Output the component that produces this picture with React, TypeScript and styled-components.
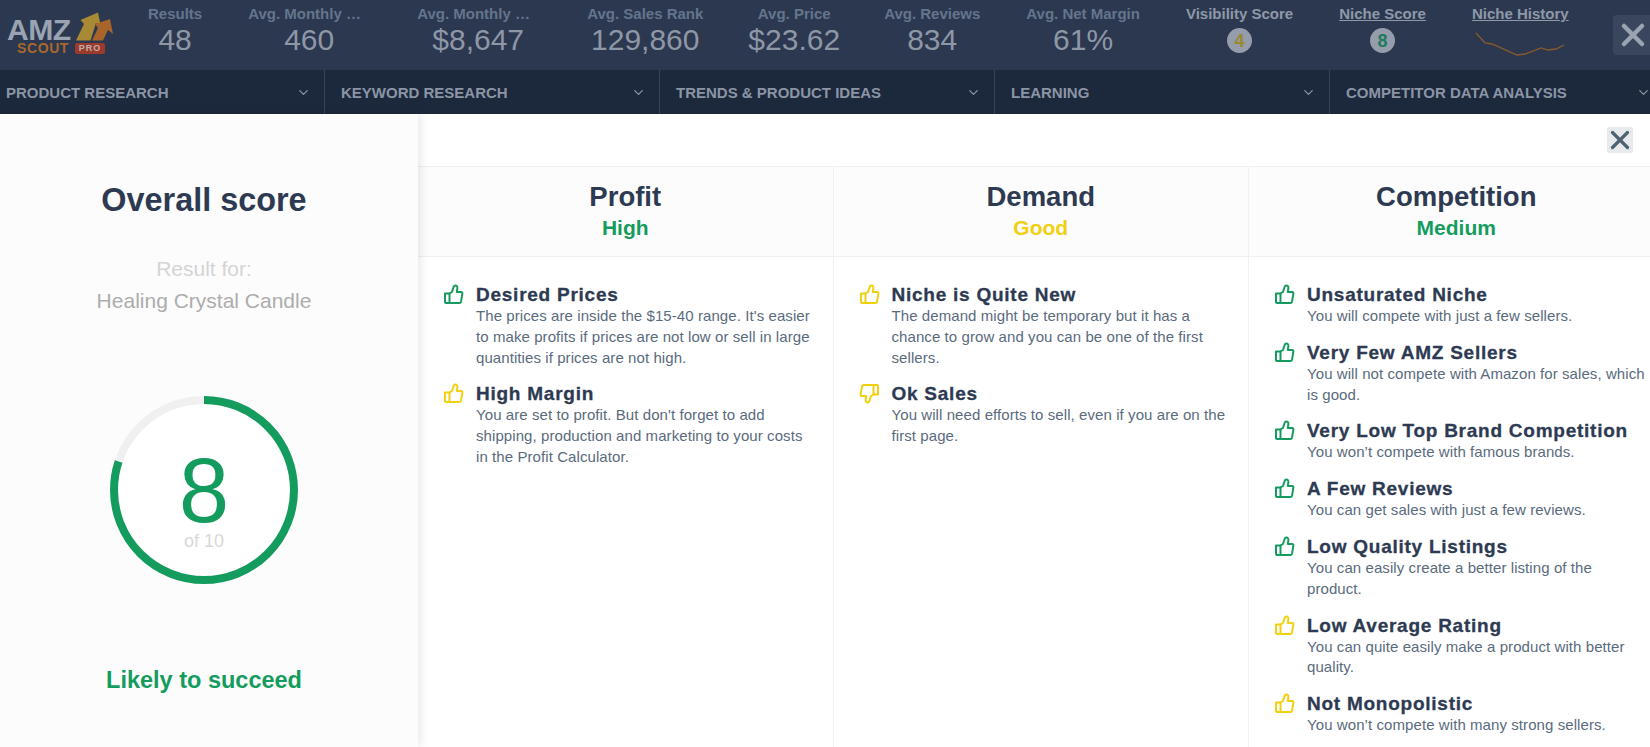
import React from 'react';
import styled, { createGlobalStyle } from 'styled-components';
import { ChevronDown, X } from 'lucide-react';

const GREEN = '#149c5e';
const YELLOW = '#f2d00f';
const NAVY = '#2d3a52';

const GlobalStyle = createGlobalStyle`
    html, body {
        margin: 0;
        padding: 0;
        height: 100%;
        overflow: hidden;
        background: #ffffff;
        font-family: "Liberation Sans", Arial, sans-serif;
    }
`;

const Page = styled.div`
    width: 1650px;
    height: 747px;
    overflow: hidden;
    display: flex;
    flex-direction: column;
`;

// top stats bar
const TopBar = styled.header`
    flex: 0 0 70px;
    background: #2c3850;
    display: flex;
    align-items: flex-start;
    position: relative;
`;

const Logo = styled.div`
    flex: 0 0 148px;
    height: 70px;
    position: relative;
`;

const LogoAmz = styled.span`
    position: absolute;
    left: 7px;
    top: 15px;
    font-size: 29px;
    line-height: 30px;
    font-weight: 700;
    color: #9aa3b2;
    letter-spacing: -0.5px;
    transform: scaleX(1.04);
    transform-origin: left;
`;

const LogoScout = styled.span`
    position: absolute;
    left: 17px;
    top: 41px;
    font-size: 14px;
    line-height: 14px;
    font-weight: 700;
    color: #a8682c;
    letter-spacing: 0.6px;
`;

const LogoPro = styled.span`
    position: absolute;
    left: 75px;
    top: 43px;
    width: 30px;
    height: 11px;
    border-radius: 2px;
    background: #9c3a2c;
    color: #bcb0ac;
    font-size: 9px;
    line-height: 11px;
    font-weight: 700;
    text-align: center;
    letter-spacing: 1px;
`;

const LogoArrows = styled.svg`
    position: absolute;
    left: 75px;
    top: 12px;
`;

const Stats = styled.div`
    display: flex;
    gap: 46px;
    padding-top: 5px;
`;

const Stat = styled.div<{ $nudge?: number }>`
    margin-left: ${(p) => p.$nudge ?? 0}px;
    text-align: center;
    white-space: nowrap;
`;

const StatLabel = styled.div<{ $bright?: boolean; $link?: boolean; $truncate?: boolean }>`
    font-size: 15px;
    line-height: 18px;
    font-weight: 700;
    color: ${(p) => (p.$bright ? '#8f98a8' : '#64758c')};
    text-decoration: ${(p) => (p.$link ? 'underline' : 'none')};
    ${(p) => p.$truncate && 'width: 122px; overflow: hidden; text-overflow: ellipsis;'}
`;

const StatValue = styled.div`
    font-size: 30px;
    line-height: 34px;
    color: #8e97a6;
`;

const Badge = styled.div<{ $color: string }>`
    width: 25px;
    height: 25px;
    margin: 5px auto 0;
    border-radius: 50%;
    background: #959cab;
    color: ${(p) => p.$color};
    font-size: 18px;
    line-height: 26px;
    font-weight: 700;
    text-align: center;
`;

const Spark = styled.svg`
    display: block;
    margin: 8px auto 0;
`;

const TopClose = styled.div`
    position: absolute;
    left: 1613px;
    top: 15px;
    width: 40px;
    height: 40px;
    border-radius: 4px;
    background: #3a465e;
    color: #9aa3b2;
    display: flex;
    align-items: center;
    justify-content: center;
`;

// dark dropdown nav
const Nav = styled.nav`
    flex: 0 0 44px;
    background: #1c283c;
    display: flex;
    margin-left: -10px;
    width: 1700px;
`;

const NavCell = styled.div`
    flex: 0 0 335px;
    box-sizing: border-box;
    padding: 0 13px 0 16px;
    border-right: 1px solid #36425a;
    display: flex;
    align-items: center;
    justify-content: space-between;
    font-size: 15px;
    font-weight: 700;
    color: #8b95a5;
`;

const NavChevron = styled(ChevronDown)`
    width: 15px;
    height: 15px;
    color: #8b95a5;
`;

// modal body
const Body = styled.main`
    flex: 1;
    display: flex;
    min-height: 0;
    background: #ffffff;
`;

const ScorePanel = styled.aside`
    flex: 0 0 418px;
    box-sizing: border-box;
    padding-right: 10px;
    background: #fcfcfc;
    box-shadow: 2px 0 10px rgba(0, 0, 0, 0.1);
    display: flex;
    flex-direction: column;
    align-items: center;
    position: relative;
    z-index: 1;
`;

const ScoreTitle = styled.h2`
    margin: 66px 0 0;
    font-size: 32.4px;
    line-height: 40px;
    font-weight: 700;
    color: ${NAVY};
`;

const ResultFor = styled.div<{ $first?: boolean }>`
    margin-top: ${(p) => (p.$first ? '37px' : '8px')};
    font-size: 21px;
    line-height: 24px;
    color: ${(p) => (p.$first ? '#d4d4d4' : '#adadad')};
`;

const Ring = styled.div`
    margin-top: 83px;
    width: 188px;
    height: 188px;
    display: grid;
    place-items: center;
    position: relative;
`;

const RingSvg = styled.svg`
    position: absolute;
    inset: 0;
`;

const RingText = styled.div`
    position: relative;
    text-align: center;
    color: ${GREEN};
    font-size: 90px;
    line-height: 92px;
    margin-top: 16px;
`;

const RingSub = styled.div`
    margin-top: -6px;
    font-size: 18px;
    line-height: 20px;
    color: #d8d8d8;
`;

const Verdict = styled.div`
    margin-top: 82px;
    font-size: 23.5px;
    line-height: 28px;
    font-weight: 700;
    color: ${GREEN};
`;

const Details = styled.section`
    flex: 1;
    min-width: 0;
    display: flex;
    flex-direction: column;
`;

const CloseRow = styled.div`
    flex: 0 0 52px;
    display: flex;
    justify-content: flex-end;
    padding: 13px 17px 0 0;
    box-sizing: border-box;
`;

const CloseButton = styled.div`
    width: 26px;
    height: 26px;
    border-radius: 3px;
    background: #e7e9ea;
    color: #4f6272;
    display: flex;
    align-items: center;
    justify-content: center;
`;

const CloseIcon = styled(X)`
    flex: none;
`;

const Columns = styled.div`
    flex: 1;
    display: flex;
    border-top: 1px solid #f0f0f0;
    width: 1248px;
`;

const Column = styled.div`
    flex: 0 0 415.5px;
    box-sizing: border-box;
    border-right: 1px solid #f0f0f0;
`;

const ColumnHead = styled.div`
    height: 90px;
    box-sizing: border-box;
    padding-top: 14px;
    background: #fcfcfc;
    border-bottom: 1px solid #f0f0f0;
    text-align: center;
`;

const ColumnTitle = styled.div`
    font-size: 27.5px;
    line-height: 32px;
    font-weight: 700;
    color: ${NAVY};
`;

const ColumnRate = styled.div<{ $color: string }>`
    font-size: 21px;
    line-height: 30px;
    font-weight: 700;
    color: ${(p) => p.$color};
`;

const Items = styled.div`
    padding: 27px 14.5px 0 25px;
    display: flex;
    flex-direction: column;
    gap: 15px;
`;

const Item = styled.div`
    display: grid;
    grid-template-columns: 33px 1fr;
`;

const ThumbIcon = styled.svg<{ $color: string; $down?: boolean }>`
    display: block;
    color: ${(p) => p.$color};
    transform: ${(p) => (p.$down ? 'rotate(180deg)' : 'none')};
`;

const ItemTitle = styled.div`
    font-size: 19px;
    line-height: 22px;
    font-weight: 700;
    color: ${NAVY};
    letter-spacing: 0.75px;
    -webkit-text-stroke: 0.3px ${NAVY};
`;

const ItemText = styled.div`
    font-size: 15px;
    line-height: 20.8px;
    letter-spacing: 0.08px;
    color: #5a6b7d;
    grid-column: 2;
`;

type Finding = { title: string; text: string; color: string; down?: boolean };

const PROFIT: Finding[] = [
    { title: 'Desired Prices', text: "The prices are inside the $15-40 range. It's easier to make profits if prices are not low or sell in large quantities if prices are not high.", color: GREEN },
    { title: 'High Margin', text: "You are set to profit. But don't forget to add shipping, production and marketing to your costs in the Profit Calculator.", color: YELLOW },
];

const DEMAND: Finding[] = [
    { title: 'Niche is Quite New', text: 'The demand might be temporary but it has a chance to grow and you can be one of the first sellers.', color: YELLOW },
    { title: 'Ok Sales', text: 'You will need efforts to sell, even if you are on the first page.', color: YELLOW, down: true },
];

const COMPETITION: Finding[] = [
    { title: 'Unsaturated Niche', text: 'You will compete with just a few sellers.', color: GREEN },
    { title: 'Very Few AMZ Sellers', text: 'You will not compete with Amazon for sales, which is good.', color: GREEN },
    { title: 'Very Low Top Brand Competition', text: 'You won’t compete with famous brands.', color: GREEN },
    { title: 'A Few Reviews', text: 'You can get sales with just a few reviews.', color: GREEN },
    { title: 'Low Quality Listings', text: 'You can easily create a better listing of the product.', color: GREEN },
    { title: 'Low Average Rating', text: 'You can quite easily make a product with better quality.', color: YELLOW },
    { title: 'Not Monopolistic', text: 'You won’t compete with many strong sellers.', color: YELLOW },
];

const STATS = [
    { label: 'Results', value: '48' },
    { label: 'Avg. Monthly Sales', value: '460', truncate: true },
    { label: 'Avg. Monthly Revenue', value: '$8,647', truncate: true, nudge: 1 },
    { label: 'Avg. Sales Rank', value: '129,860', nudge: 2 },
    { label: 'Avg. Price', value: '$23.62', nudge: -1 },
    { label: 'Avg. Reviews', value: '834', nudge: -2 },
    { label: 'Avg. Net Margin', value: '61%' },
];

const NAV_ITEMS = ['PRODUCT RESEARCH', 'KEYWORD RESEARCH', 'TRENDS & PRODUCT IDEAS', 'LEARNING', 'COMPETITOR DATA ANALYSIS'];

const Thumb = ({ color, down }: { color: string; down?: boolean }): JSX.Element => (
    <ThumbIcon $color={color} $down={down} width="21" height="21" viewBox="0 0 21 21" fill="none" stroke="currentColor" strokeWidth="2" strokeLinejoin="round" strokeLinecap="round">
        <path d="M2 9.5h4.5V19H3a1 1 0 0 1-1-1z" />
        <path d="M6.5 9.5 9 8l1.6-5c.3-1 1-1.5 1.8-1.5 1.4 0 2.2 1.2 2 2.6L13.8 8H18a1.4 1.4 0 0 1 1.4 1.7l-1.4 8c-.2.9-.8 1.3-1.6 1.3H6.5" />
    </ThumbIcon>
);

const FindingColumn = ({ title, rate, rateColor, items }: { title: string; rate: string; rateColor: string; items: Finding[] }): JSX.Element => (
    <Column>
        <ColumnHead>
            <ColumnTitle>{title}</ColumnTitle>
            <ColumnRate $color={rateColor}>{rate}</ColumnRate>
        </ColumnHead>
        <Items>
            {items.map((item) => (
                <Item key={item.title}>
                    <Thumb color={item.color} down={item.down} />
                    <ItemTitle>{item.title}</ItemTitle>
                    <ItemText>{item.text}</ItemText>
                </Item>
            ))}
        </Items>
    </Column>
);

const App = (): JSX.Element => {
    const circumference = 2 * Math.PI * 90;
    return (
        <Page>
            <GlobalStyle />
            <TopBar>
                <Logo>
                    <LogoAmz>AMZ</LogoAmz>
                    <LogoScout>SCOUT</LogoScout>
                    <LogoPro>PRO</LogoPro>
                    <LogoArrows width="40" height="32" viewBox="0 0 40 32">
                        <path d="M1 28.5 9 12 5.5 8 23 .5 26 15l-5-4-5.500 17.500Z" fill="#a98a34" />
                        <path d="M17 28.500 23 16l-3-4L35 7l3 15-5-4-5 10.500Z" fill="#a8642a" />
                    </LogoArrows>
                </Logo>
                <Stats>
                    {STATS.map((stat) => (
                        <Stat key={stat.label} $nudge={stat.nudge}>
                            <StatLabel $truncate={stat.truncate}>{stat.label}</StatLabel>
                            <StatValue>{stat.value}</StatValue>
                        </Stat>
                    ))}
                    <Stat>
                        <StatLabel $bright>Visibility Score</StatLabel>
                        <Badge $color="#9a8a2c">4</Badge>
                    </Stat>
                    <Stat>
                        <StatLabel $bright $link>Niche Score</StatLabel>
                        <Badge $color="#1f7a5e">8</Badge>
                    </Stat>
                    <Stat>
                        <StatLabel $bright $link>Niche History</StatLabel>
                        <Spark width="90" height="26" viewBox="0 0 90 26">
                            <path d="M1 2 L10 12 L17 13 L42 24 L50 23 L66 17 L73 19 L81 18 L89 14" fill="none" stroke="#8a5a2c" strokeWidth="1.3" />
                        </Spark>
                    </Stat>
                </Stats>
                <TopClose><X size={36} strokeWidth={3} /></TopClose>
            </TopBar>
            <Nav>
                {NAV_ITEMS.map((item) => (
                    <NavCell key={item}>
                        {item}
                        <NavChevron />
                    </NavCell>
                ))}
            </Nav>
            <Body>
                <ScorePanel>
                    <ScoreTitle>Overall score</ScoreTitle>
                    <ResultFor $first>Result for:</ResultFor>
                    <ResultFor>Healing Crystal Candle</ResultFor>
                    <Ring>
                        <RingSvg width="188" height="188" viewBox="0 0 188 188">
                            <circle cx="94" cy="94" r="90" fill="#ffffff" stroke="#f0f0f0" strokeWidth="8" />
                            <circle
                                cx="94"
                                cy="94"
                                r="90"
                                fill="none"
                                stroke={GREEN}
                                strokeWidth="8"
                                strokeDasharray={`${circumference * 0.8} ${circumference}`}
                                transform="rotate(-90 94 94)"
                            />
                        </RingSvg>
                        <RingText>
                            8
                            <RingSub>of 10</RingSub>
                        </RingText>
                    </Ring>
                    <Verdict>Likely to succeed</Verdict>
                </ScorePanel>
                <Details>
                    <CloseRow>
                        <CloseButton><CloseIcon size={30} strokeWidth={2.6} /></CloseButton>
                    </CloseRow>
                    <Columns>
                        <FindingColumn title="Profit" rate="High" rateColor={GREEN} items={PROFIT} />
                        <FindingColumn title="Demand" rate="Good" rateColor={YELLOW} items={DEMAND} />
                        <FindingColumn title="Competition" rate="Medium" rateColor={GREEN} items={COMPETITION} />
                    </Columns>
                </Details>
            </Body>
        </Page>
    );
};

export default App;
